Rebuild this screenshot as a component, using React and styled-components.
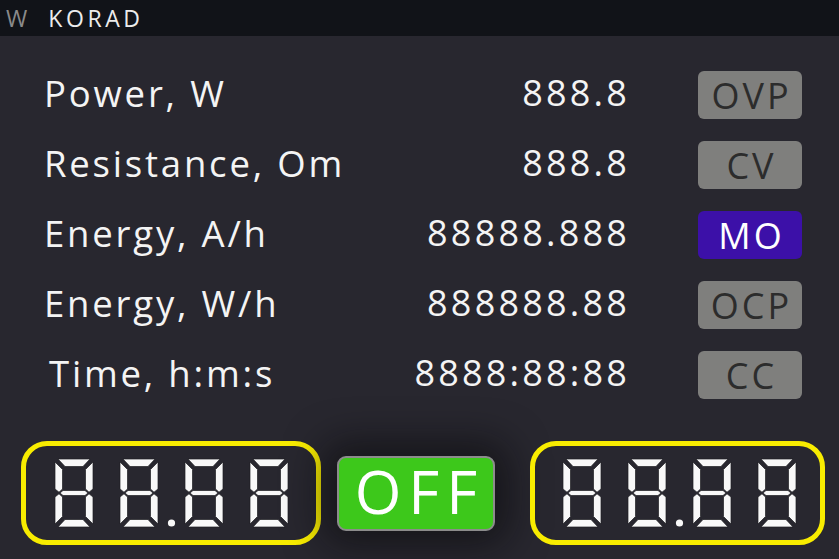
import React from "react";
import styled, { createGlobalStyle } from "styled-components";

const GlobalStyle = createGlobalStyle`
  html, body { margin: 0; padding: 0; background: #28272f; }
  body { font-family: "Open Sans", "Noto Sans", sans-serif; }
`;

const Frame = styled.div`
  width: 839px;
  height: 559px;
  display: flex;
  flex-direction: column;
  background: #28272f;
  overflow: hidden;
`;

const TitleBar = styled.div`
  height: 36px;
  background: #111318;
  display: flex;
  align-items: center;
  padding-left: 6px;
  gap: 20px;
  font-size: 23px;
  flex-shrink: 0;
`;

const TitleIcon = styled.span`
  color: #8a8a8a;
  letter-spacing: 1px;
`;

const TitleText = styled.span`
  color: #ececec;
  letter-spacing: 3.6px;
`;

const Readings = styled.div`
  display: grid;
  grid-template-columns: minmax(0, 1fr) auto 104px;
  grid-auto-rows: 48px;
  row-gap: 22px;
  column-gap: 71px;
  align-items: center;
  padding: 35px 37px 0 44px;
`;

const Label = styled.div`
  font-size: 36.5px;
  color: #f4f4f4;
  padding-left: ${(p) => (p.$indent ? "5px" : "0")};
  white-space: nowrap;
  letter-spacing: 2.8px;
  margin-top: -5px;
`;

const Value = styled.div`
  font-size: 36px;
  color: #f4f4f4;
  text-align: right;
  white-space: nowrap;
  letter-spacing: 3.2px;
  margin-right: -3px;
  margin-top: -5px;
`;

const Badge = styled.div`
  height: 48px;
  border-radius: 6px;
  background: ${(p) => (p.$active ? "#3c10a8" : "#7f7f7d")};
  color: ${(p) => (p.$active ? "#ffffff" : "#2c2c2c")};
  font-size: 36px;
  letter-spacing: 3px;
  display: flex;
  align-items: center;
  justify-content: center;
  padding-left: 3px;
`;

const BottomRow = styled.div`
  display: flex;
  align-items: center;
  padding: 42px 0 0 21px;
`;

const Display = styled.div`
  height: 104px;
  width: ${(p) => p.$w}px;
  box-sizing: border-box;
  border: 5px solid #f8ec00;
  border-radius: 26px;
  display: flex;
  align-items: center;
  padding-left: ${(p) => p.$pad}px;
  gap: 27px;
`;

const DigitSvg = styled.svg`
  width: 38px;
  height: 68px;
  overflow: visible;
  flex-shrink: 0;
`;

const PowerButton = styled.button`
  width: 158px;
  height: 75px;
  margin: 0 35px 0 16px;
  box-sizing: border-box;
  background: #3dc81b;
  border: 2px solid #8c8c8c;
  border-radius: 9px;
  color: #ffffff;
  font-family: inherit;
  font-size: 60px;
  letter-spacing: 7px;
  line-height: 1;
  padding: 0 0 4px 7px;
  display: flex;
  align-items: center;
  justify-content: center;
  box-shadow: 0 0 38px 14px rgba(8, 8, 10, 0.55);
  cursor: pointer;
`;

const SEGMENTS = [
  "3,0 35,0 28,7.5 10,7.5",
  "0,3 7.5,10.5 7.5,30 4,33.2 0,30",
  "38,3 30.5,10.5 30.5,30 34,33.2 38,30",
  "5,34 8,31.5 30,31.5 33,34 30,36.5 8,36.5",
  "0,38 4,34.8 7.5,38 7.5,57.5 0,65",
  "38,38 34,34.8 30.5,38 30.5,57.5 38,65",
  "3,68 35,68 28,60.5 10,60.5",
];

function Digit({ dp }) {
  return (
    <DigitSvg viewBox="0 0 38 68">
      {SEGMENTS.map((pts, i) => (
        <polygon key={i} points={pts} fill="#f8f8f8" stroke="#1e1e22" strokeWidth="0.7" />
      ))}
      {dp && <circle cx="51.5" cy="64" r="3.6" fill="#f8f8f8" />}
    </DigitSvg>
  );
}

function SevenSeg({ w, pad }) {
  return (
    <Display $w={w} $pad={pad}>
      <Digit />
      <Digit dp />
      <Digit />
      <Digit />
    </Display>
  );
}

const rows = [
  { label: "Power, W", value: "888.8", badge: "OVP" },
  { label: "Resistance, Om", value: "888.8", badge: "CV" },
  { label: "Energy, A/h", value: "88888.888", badge: "MO", active: true },
  { label: "Energy, W/h", value: "888888.88", badge: "OCP" },
  { label: "Time, h:m:s", value: "8888:88:88", badge: "CC", indent: true },
];

export default function App() {
  return (
    <>
      <GlobalStyle />
      <Frame>
        <TitleBar>
          <TitleIcon>W</TitleIcon>
          <TitleText>KORAD</TitleText>
        </TitleBar>
        <Readings>
          {rows.map((r) => (
            <React.Fragment key={r.label}>
              <Label $indent={r.indent}>{r.label}</Label>
              <Value>{r.value}</Value>
              <Badge $active={r.active}>{r.badge}</Badge>
            </React.Fragment>
          ))}
        </Readings>
        <BottomRow>
          <SevenSeg w={300} pad={29} />
          <PowerButton>OFF</PowerButton>
          <SevenSeg w={295} pad={28} />
        </BottomRow>
      </Frame>
    </>
  );
}
